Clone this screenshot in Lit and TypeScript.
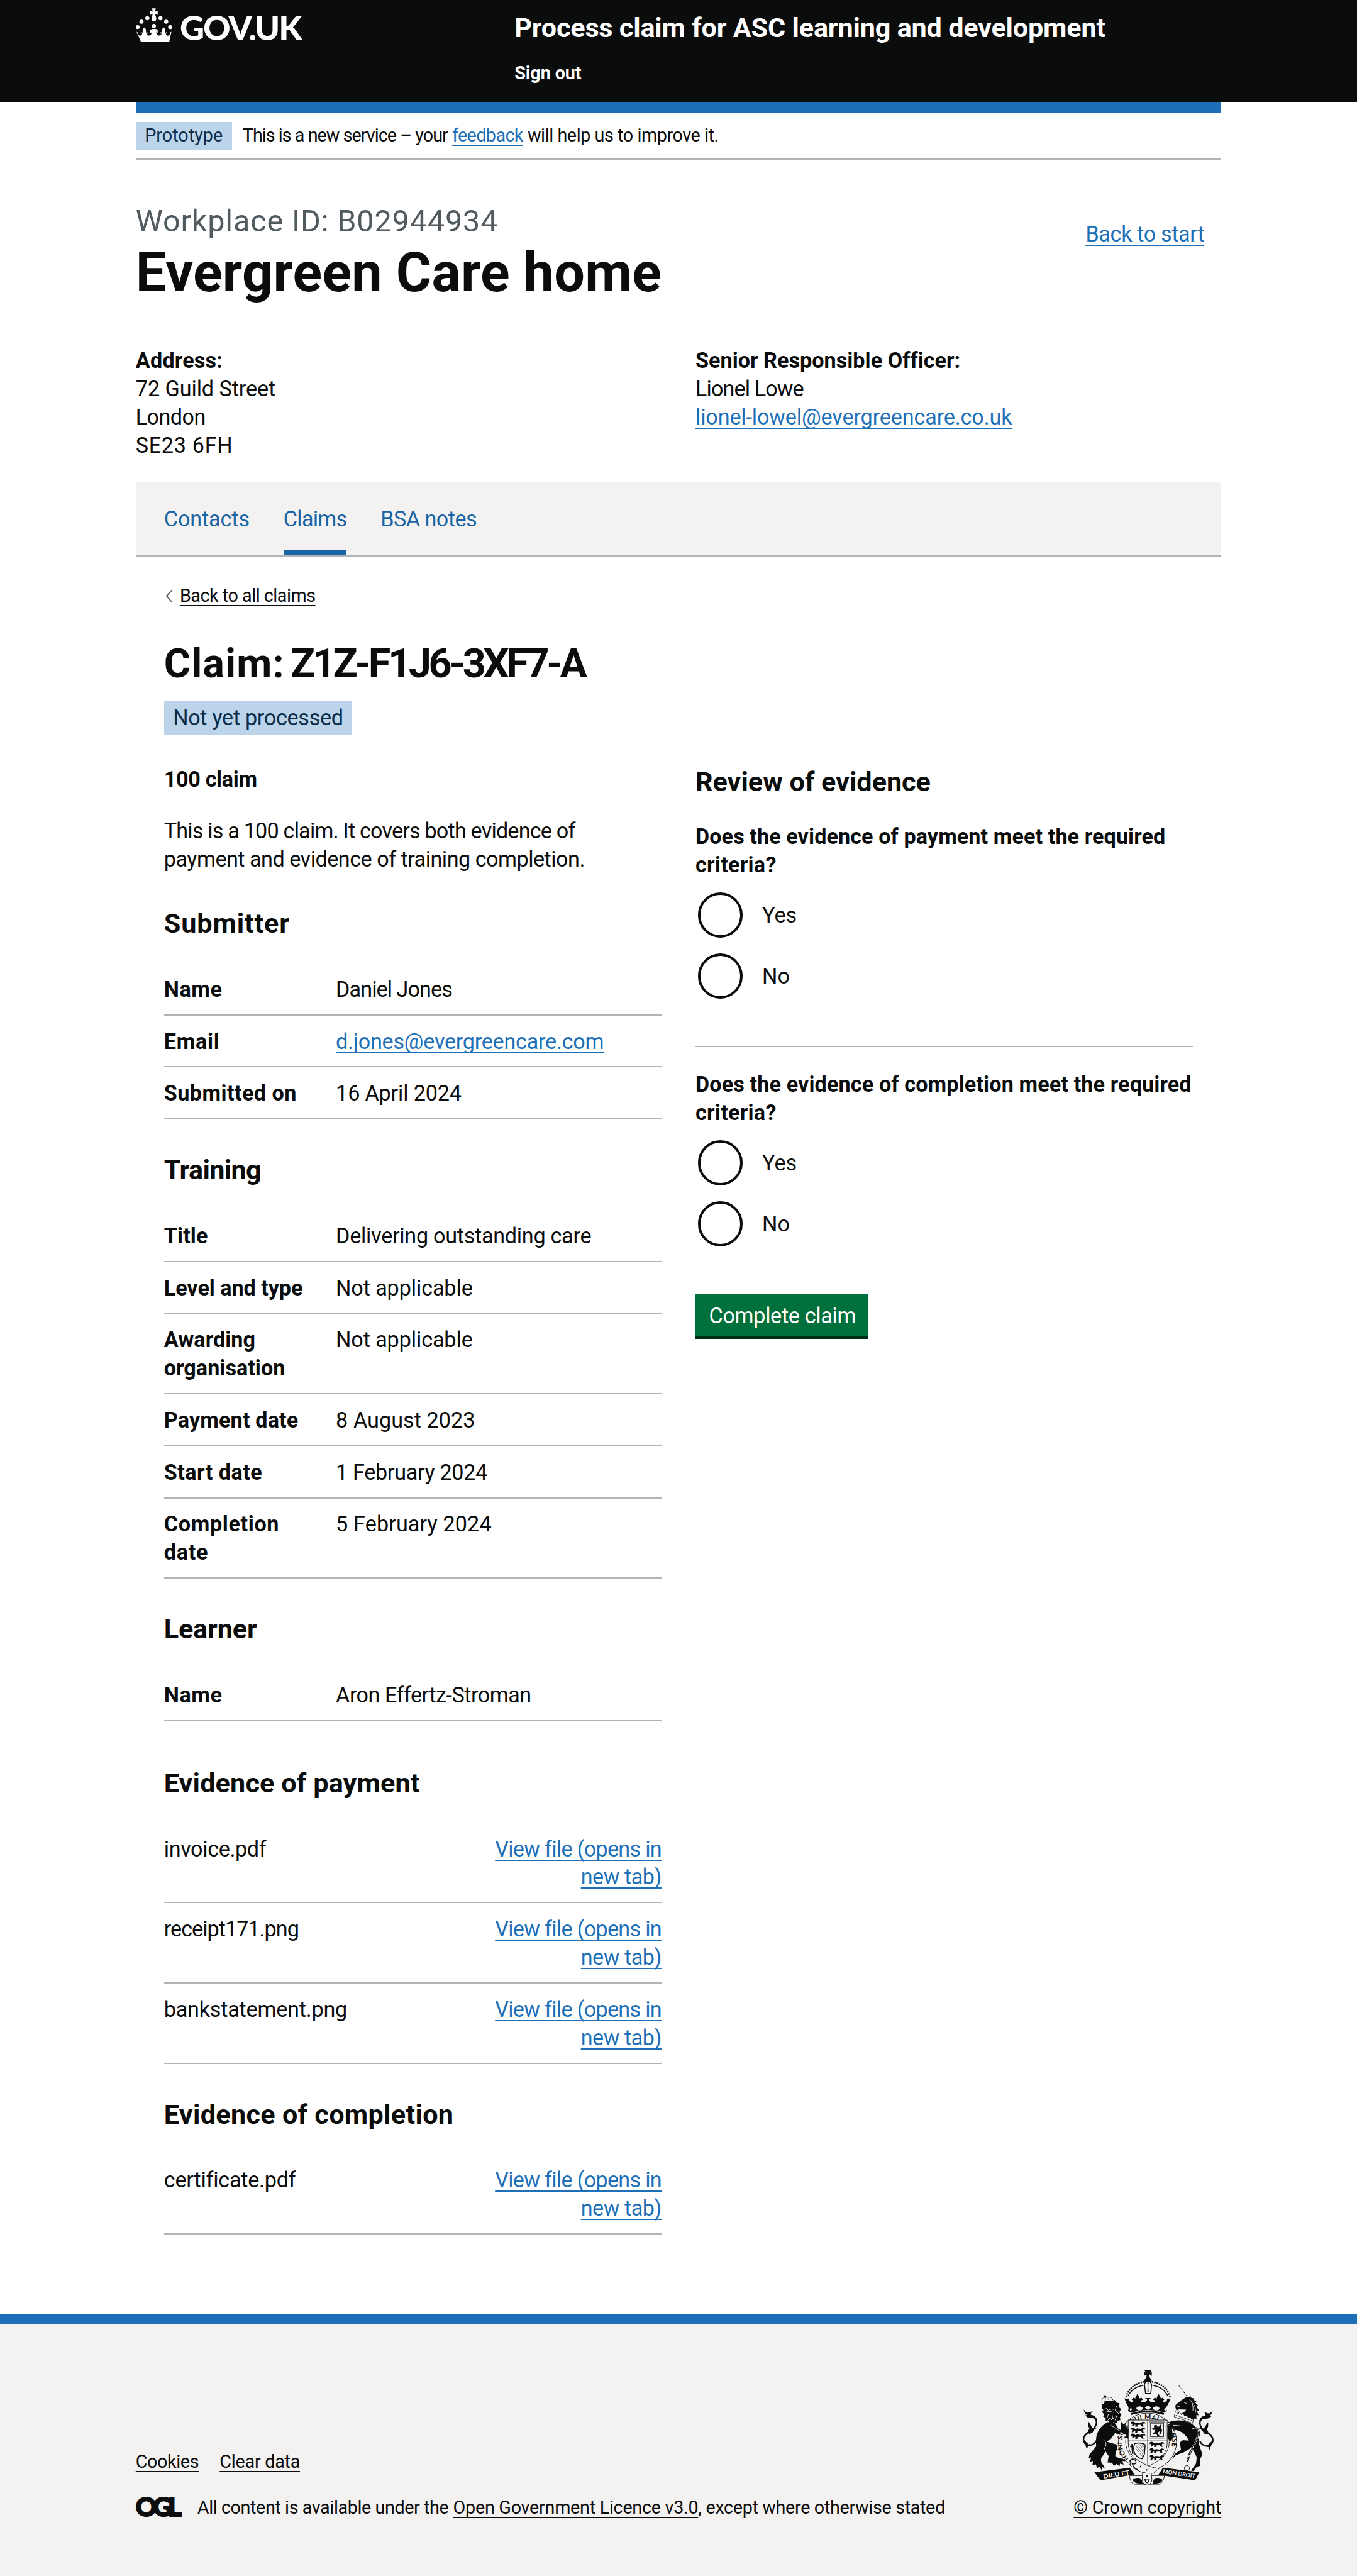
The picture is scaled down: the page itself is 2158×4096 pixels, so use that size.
import { LitElement, html, svg, css, unsafeCSS, nothing } from "lit";
import { customElement } from "lit/decorators.js";

const SCALE = 2158 / 2400;
const r = (n: number) => unsafeCSS(`${(n * SCALE).toFixed(3)}px`);

const FACE = '"Roboto", "Liberation Sans", sans-serif';
const context = document.createElement("canvas").getContext("2d")!;

/** A run of text, tracked so that its ink spans the given width. */
const run = (text: string, width: number, size = 38, weight = 400, face = FACE) => {
  context.font = `${weight} ${size}px ${face}`;
  const m = context.measureText(text);
  const ink = m.actualBoundingBoxRight + m.actualBoundingBoxLeft;
  const tracking = ((width - ink) / (text.length - 1)) * SCALE;
  return html`<span style="letter-spacing:${tracking.toFixed(3)}px">${text}</span>`;
};
const bold = (text: string, width: number, size = 38) => run(text, width, size, 700);

type Run = [text: string, width: number];

const base = css`
  * {
    box-sizing: border-box;
  }
  h1,
  h2,
  h3,
  p,
  dl,
  dd,
  dt,
  ul {
    margin: 0;
    padding: 0;
    font: inherit;
  }
  a {
    color: #1d70b8;
    text-decoration: underline;
    text-decoration-thickness: ${r(2)};
    text-underline-offset: 0.158em;
    text-decoration-skip-ink: none;
  }
  .strong {
    font-weight: 700;
  }
`;

@customElement("crown-logo")
class CrownLogo extends LitElement {
  static styles = css`
    :host {
      display: block;
    }
    svg {
      display: block;
      width: ${r(64)};
      height: ${r(61)};
      fill: #fff;
    }
  `;
  render() {
    const pearls = [
      [40, 141, 10.5],
      [60, 112, 11],
      [91, 94, 11],
      [161, 94, 11],
      [191, 112, 11],
      [212, 141, 10.5],
      [126, 135, 11],
    ];
    return html`<svg viewBox="30 41 192 182">
      ${pearls.map(([x, y, s]) => svg`<circle cx=${x} cy=${y} r=${s} />`)}
      <path
        d="M116 41h20l-4 18 14-5v22l-14-6 6 22q3 18-12 19-15-1-12-19l6-22-14 6V54l14 5z"
      />
      <path
        d="M32 166l12 6-5 1q5 17 17 13 8-4 7-12l-8 2 3-8 8 3q-1-6 1-9-4-9 8-20 13 11 8 20 3 3 1 9l8-3 3 8-8-2q0 10 12 12 13 0 17-14l2-4-10 4v-17l12 5-7-9h31l-7 9 12-5v17l-10-4 2 4q4 14 17 14 12-2 12-12l-8 2 3-8 8 3q-2-6 1-9-5-9 8-20 12 11 8 20 2 3 1 9l8-3 3 8-8-2q-1 8 7 12 12 4 17-13l-5-1 12-6-13 56q-74-7-154 0z"
        transform="matrix(.96 0 0 1 3 0)"
      />
    </svg>`;
  }
}

@customElement("royal-arms")
class RoyalArms extends LitElement {
  static styles = css`
    :host {
      display: block;
    }
    svg {
      display: block;
      width: ${r(233)};
      height: ${r(205)};
      overflow: visible;
    }
    .ink {
      fill: #0b0c0c;
    }
    .paper {
      fill: #f3f2f1;
    }
    .line {
      fill: none;
      stroke: #0b0c0c;
      stroke-linecap: round;
      stroke-linejoin: round;
      stroke-width: 3;
    }
    .outlined {
      fill: #f3f2f1;
      stroke: #0b0c0c;
      stroke-width: 3;
      stroke-linejoin: round;
    }
    .gap {
      fill: none;
      stroke: #f3f2f1;
      stroke-width: 3;
      stroke-linecap: round;
    }
    .w2 {
      stroke-width: 2;
    }
    .w5 {
      stroke-width: 5;
    }
    .w8 {
      stroke-width: 8;
    }
    .pearls {
      stroke-width: 9;
      stroke-dasharray: 0 12.5;
    }
    .beads {
      stroke-width: 7;
      stroke-dasharray: 0 11;
    }
    .fine {
      stroke-width: 4;
      stroke-dasharray: 0 6;
    }
    .horn {
      stroke-width: 4;
      stroke-dasharray: 5 4;
      stroke-linecap: butt;
    }
    .links {
      stroke-width: 11;
      stroke-dasharray: 12 6;
    }
    .holes {
      stroke-width: 5;
      stroke-dasharray: 8 10;
    }
    text {
      font-family: "Lato", sans-serif;
      font-weight: 700;
    }
    .scroll {
      font-size: 31px;
      fill: #f3f2f1;
    }
    .motto {
      font-size: 36px;
      fill: #0b0c0c;
    }
  `;
  passant(x: number, y: number) {
    return svg`<path class="ink" transform="translate(${x} ${y})"
      d="M2 3l8-3 9 3 3 6 12-4 18 3 12-6 10 2 4 8-9-3-5 6 3 9 9 2-16 2-7-10-16 1-5 6 7 3h-16l1-9-6-1-6 8-10-1 6-5-2-8-7 1z"/>`;
  }
  tail() {
    return svg`<path class="line w8" d="M268 502q-14 26-48 24-26-18-18-44 10-20 44-38 30-26 22-52-10-26-38-24"/>
      <path class="ink" d="M202 334q8 18 24 18l24-9q-14 12-10 20 26 4 32 26l-8 4q-10-16-28-12-16-2-28-14l10-2q-16-12-16-31z"/>
      <path class="ink" d="M226 398l22 34 28-2q-20 8-28 28l-18 8q-10-18 2-28-10-18-6-40zM198 492l30 28 12-2-16 12-6 16-8-22z"/>`;
  }
  render() {
    return html`<svg viewBox="190 124 700 615">
      <g>
        ${this.tail()}
        <g transform="matrix(-1 0 0 1 1088 4)">${this.tail()}</g>

        <path
          class="ink"
          d="M328 402q-44 24-58 68-6 34-2 60l-36 44-4 18 12-2-4 22 14-4-2 22 18-4 6 20 14-6 12 20 2-20 12 10-2-18q-20-10-16-38l24-36 16 24-6 34 24 2 10 18 12-12 18 12 2-14 20 6-8-18 20-4-20-10q-28-2-38-18 10-24 12-56l-56-16q30-22 44-46l34 14 30 22 8-16-14-20-42-24-16-28z"
        />
        <path class="gap" d="M344 418l60 38M306 496q14 8 14 26l-10 26" />
        <path
          class="ink"
          d="M296 322l10 18-8 8 12 12-6 12 14 8 0 14 16 4 12 14 14-10 16 6 4-14 16-2-2-16 8-14-12-12 10-18-12-10 4-20-16-4-10-14-18 6-30-2z"
        />
        <path
          class="gap"
          d="M308 334l16-4 8 10 12-8 14 2M318 350q18-10 40 0M332 362l-6 16M352 360l4 24 10-6M376 316l-8 24 18 16M378 366l-10 26M330 392l8-10 12 8"
        />
        <path class="line fine" d="M298 300q-2-26 14-30h30q18 6 14 30M314 300q-4-18 12-26 14 8 10 26" />
        <path class="ink" d="M300 306q26-10 56-2l4 10q-34-8-60 4zM309 258l14 3-3 11h-10z" />

        <path class="line horn" d="M707 208l44 58" />
        <path
          class="ink"
          d="M688 322l2-12 30-24 30-20 10 4 8-8 4 10 16 4-4 6 18 12-8 4 16 18-10 4 14 20-12 2 10 24-12-2 0 24-14-6-8 14q-30-12-66-36 24-8 34-24l-38-2-14 6z"
        />
        <path class="gap" d="M736 298l12 4M764 280q22 24 18 60M780 300q18 20 16 50M700 318l10 2" />
        <path
          class="ink"
          d="M654 402q32-14 72-8 68 10 82 64l6 62 18 52-12 28 2 34-20 6-16 22-14-2 26-38 4-34-14-28-14-22-40 24-44 16-18 20 12-26 34-24-6-38 16-12 32 2q-18-42-66-56l-42-2 8 46-14 4-12-42q0-34 18-48z"
        />
        <path class="outlined" d="M688 346l16 12 4-12 12 16 10-8 8 16 14-6 4 16 14-4 4 12 10-2-4 22q-42-16-98-34z" />
        <path class="line fine" d="M692 366l84 28" />
        <path class="gap" d="M672 418l44 4M786 520q-10 18-20 24M806 470l-20 54" />
        <path class="line links" d="M780 438q24-14 32 14 4 20-10 50-22 40-36 64l-14 44" />
        <path class="gap holes w5" d="M780 438q24-14 32 14 4 20-10 50-22 40-36 64l-14 44" />
        <circle class="line" cx="750" cy="647" r="14" />
      </g>

      <ellipse class="outlined" cx="540" cy="506" rx="155" ry="152" />
      <ellipse class="outlined" cx="540" cy="506" rx="116" ry="114" />
      <path id="motto" fill="none" d="M442 596A133 124 0 1 1 630 600" />
      <text class="motto"><textPath href="#motto" textLength="520">HONI SOIT QUI MAL Y PENSE</textPath></text>

      <path class="outlined" d="M438 391h207v120q0 84-104 126-103-42-103-126z" />
      <path class="line" d="M541 391v246M438 497h207" />
      ${[398, 430, 462].map((y) => this.passant(452, y))}
      ${[506, 540, 576].map((y) => this.passant(552, y))}
      <path class="line" d="M551 401h82v86h-82zM558 408h68v72h-68z" />
      <path
        class="ink"
        d="M574 420l14-4 6 12 10-4 2-10 10 6-6 14 8 10-6 22-10-4 4-12-10 6 2 12 8 8-14-2-6-12-10 6-8-4 8-8 6-14-12 2-6-8 12-2z"
      />
      <path class="line w5" d="M472 516q36-8 56 6l-4 50-12 24q-16 2-38-24-14-26-2-56z" />
      <path class="line w2" d="M480 530l36 44M486 522l34 40M494 518l28 32M504 516l20 22M476 540l38 44" />
      <path class="line w8" d="M458 522l4 46M452 530v2" />

      <path class="ink" d="M400 400l40 40-2 50-24-8 18-8-34-20z" />
      <path class="ink" d="M648 430l16-22 18-6-12 34 6 50-16 18-14-24z" />

      <path class="ink" d="M258 668l188-24 26 36-28 4-146 26-12-4z" />
      <path class="ink" d="M622 644l194 24-20 38-10 4-172-26-16-2z" />
      <text class="scroll" transform="translate(306 702) rotate(-9)" textLength="142" lengthAdjust="spacingAndGlyphs">DIEU ET</text>
      <text class="scroll" transform="translate(620 674) rotate(8.5)" textLength="174" lengthAdjust="spacingAndGlyphs">MON DROIT</text>
      <path class="outlined" d="M444 686q6 44 28 46h130q24-8 28-46z" />
      <path class="ink" d="M462 712q2-14 30-14 18 0 22 30-42 4-52-16zM620 712q-2-14-30-14-18 0-22 30 42 4 52-16z" />
      <path class="outlined" d="M514 670h46l4 40q-6 26-26 26-22-2-26-26z" />
      <path class="line w5" d="M526 704q4 20 12 20t12-20z" />
      <path class="outlined" d="M450 602q22-12 46 6 52 36 106 40l-14 12-16 14q-70 6-124-42z" />
      <path class="line w5" d="M446 612q2-16 20-12 18 6 12 20-12 10-20 0 6 26 30 34" />
      <path class="ink" d="M500 634h7v8h-7zM532 652h7v8h-7zM534 684h7v8h-7z" />

      <path
        class="ink"
        d="M524 126h38l-9 14 10-7v23l-11-8q-4 12 1 18 14 10 7 28h-34q-7-18 7-28 5-6 1-18l-11 8v-23l10 7z"
      />
      <path class="line pearls" d="M428 264q22-62 92-76" />
      <path class="line pearls" d="M659 264q-22-62-92-76" />
      <path class="line w5" d="M438 262q22-46 80-56M648 262q-22-46-80-56" />
      <path class="outlined w5" d="M524 200q8-16 19-16t19 16l-4 50h-28z" />
      <path class="line beads" d="M543 194v50" />
      <path
        class="ink"
        d="M422 276l20 2q-2 14 14 18l12-6-12-8 8-10 12 4q-2-10 10-20 12 10 10 20l12-4 8 10-14 8q14 14 30 2 8-6 6-12l-12-6h34l-12 6q-2 6 6 12 16 12 30-2l-14-8 8-10 12 4q-2-10 10-20 12 10 10 20l12-4 8 10-12 8 12 6q16-4 14-18l20-2q-10 24-22 44l-2 12 4 10-14 8-4 14q-86-26-172 0l-4-14-14-8 4-10-2-12q-12-20-20-44z"
      />
      <path class="paper" d="M543 313l17 12-17 12-17-12zM452 324l6 10-9 10-3-10zM634 324l6 10-4 10-8-10z" />
      <ellipse class="paper" cx="498" cy="329" rx="17" ry="11" />
      <ellipse class="paper" cx="587" cy="329" rx="17" ry="11" />
      <path class="gap" d="M456 352q87-26 174 0" />
      <path class="ink" d="M486 250l5 16h-10zM600 250l5 16h-10z" />
    </svg>`;
  }
}

@customElement("summary-list")
class SummaryList extends LitElement {
  static properties = { rows: { attribute: false }, heading: { attribute: false } };
  declare rows: { key: Run[]; value: Run; link?: boolean }[];
  declare heading: Run;
  static styles = [
    base,
    css`
      :host {
        display: block;
      }
      .heading {
        font-weight: 700;
        font-size: ${r(48)};
        line-height: ${r(60)};
        margin-bottom: ${r(40)};
      }
      .row {
        display: grid;
        grid-template-columns: ${r(304)} 1fr;
        padding: ${r(21)} 0 0;
        border-bottom: 2px solid #b1b4b6;
        height: ${r(92)};
      }
      .row.tall {
        height: ${r(142)};
      }
      .line {
        display: block;
        white-space: nowrap;
      }
    `,
  ];
  render() {
    return html`<h3 class="heading">${bold(this.heading[0], this.heading[1], 48)}</h3>
      <dl>
        ${this.rows.map(
          (row) => html`<div class="row ${row.key.length > 1 ? "tall" : ""}">
            <dt class="strong">${row.key.map(([t, w]) => html`<span class="line">${bold(t, w)}</span>`)}</dt>
            <dd class="line">
              ${row.link ? html`<a href="#">${run(...row.value)}</a>` : run(...row.value)}
            </dd>
          </div>`,
        )}
      </dl>`;
  }
}

@customElement("file-list")
class FileList extends LitElement {
  static properties = { files: { attribute: false }, heading: { attribute: false } };
  declare files: Run[];
  declare heading: Run;
  static styles = [
    base,
    css`
      :host {
        display: block;
      }
      .heading {
        font-weight: 700;
        font-size: ${r(48)};
        line-height: ${r(60)};
        margin-bottom: ${r(40)};
      }
      .row {
        display: flex;
        justify-content: space-between;
        padding: ${r(21)} 0 0;
        border-bottom: 2px solid #b1b4b6;
        height: ${r(142)};
      }
      .view {
        text-align: right;
      }
    `,
  ];
  render() {
    return html`<h3 class="heading">${bold(this.heading[0], this.heading[1], 48)}</h3>
      ${this.files.map(
        ([name, width]) => html`<div class="row">
          <span>${run(name, width)}</span>
          <a class="view" href="#">${run("View file (opens in", 292)}<br />${run("new tab)", 139)}</a>
        </div>`,
      )}`;
  }
}

@customElement("radio-group")
class RadioGroup extends LitElement {
  static properties = { question: { attribute: false } };
  declare question: Run[];
  static styles = [
    base,
    css`
      :host {
        display: block;
      }
      .options {
        display: flex;
        flex-direction: column;
        gap: ${r(28)};
        padding: ${r(23)} 0 0 ${r(4)};
      }
      .option {
        display: flex;
        align-items: center;
        gap: ${r(34)};
        height: ${r(80)};
      }
      .label {
        padding-top: ${r(2)};
      }
      .circle {
        width: ${r(80)};
        height: ${r(80)};
        border: ${r(4.5)} solid #0b0c0c;
        border-radius: 50%;
      }
    `,
  ];
  render() {
    return html`<p class="strong">${this.question.map(([t, w], i) => html`${i ? html`<br />` : nothing}${bold(t, w)}`)}</p>
      <div class="options">
        ${["Yes", "No"].map(
          (label) => html`<div class="option"><span class="circle"></span><span class="label">${label}</span></div>`,
        )}
      </div>`;
  }
}

@customElement("app-root")
class AppRoot extends LitElement {
  static styles = [
    base,
    css`
      :host {
        display: flex;
        flex-direction: column;
        width: 2158px;
        height: 4096px;
        overflow: hidden;
        background: #fff;
        color: #0b0c0c;
        font-family: "Roboto", "Liberation Sans", sans-serif;
        font-size: ${r(38)};
        line-height: ${r(50)};
        white-space: nowrap;
      }
      .container {
        width: ${r(1920)};
        margin: 0 auto;
      }
      .header {
        background: #0b0c0c;
        color: #fff;
        height: ${r(180)};
        flex: none;
      }
      .header-grid {
        display: grid;
        grid-template-columns: ${r(668)} 1fr;
      }
      .brand {
        display: flex;
        gap: ${r(14)};
        padding-top: ${r(14)};
      }
      .wordmark {
        font-family: "Lato", sans-serif;
        font-weight: 900;
        font-size: ${r(60)};
        line-height: ${r(68)};
      }
      .service {
        font-size: ${r(48)};
        line-height: ${r(60)};
        font-weight: 700;
        padding: ${r(20)} 0 0 ${r(2)};
      }
      .sign-out {
        font-size: ${r(32)};
        line-height: ${r(40)};
        font-weight: 700;
        padding: ${r(30)} 0 0 ${r(2)};
      }
      .accent {
        height: ${r(20)};
        background: #1d70b8;
      }
      .phase {
        display: flex;
        gap: ${r(19)};
        font-size: ${r(32)};
        padding: ${r(16)} 0 0;
        border-bottom: 2px solid #b1b4b6;
        height: ${r(82)};
      }
      .tag {
        background: #bbd4ea;
        color: #0c2d4a;
      }
      .phase-tag {
        line-height: ${r(48)};
        height: ${r(50)};
        width: ${r(170)};
        padding-left: ${r(16)};
      }
      .phase-text {
        line-height: ${r(48)};
      }
      .masthead {
        display: flex;
        justify-content: space-between;
        padding: ${r(80)} ${r(30)} 0 0;
      }
      .caption {
        display: block;
        color: #505a5f;
        font-size: ${r(54)};
        line-height: ${r(60)};
      }
      .name {
        font-size: ${r(96)};
        line-height: ${r(100)};
        font-weight: 700;
        margin-top: ${r(11)};
      }
      .start {
        padding-top: ${r(27)};
      }
      .details {
        display: grid;
        grid-template-columns: ${r(990)} 1fr;
        padding: ${r(80)} 0 ${r(39)};
      }
      .nav {
        display: flex;
        gap: ${r(60)};
        background: #f3f2f1;
        border-bottom: 2px solid #b1b4b6;
        height: ${r(132)};
        padding-left: ${r(50)};
      }
      .tab {
        color: #1a65a6;
        text-decoration: none;
        padding-top: ${r(41)};
      }
      .tab.current {
        border-bottom: ${r(10)} solid #1a65a6;
      }
      .panel {
        padding: ${r(50)} ${r(50)} 0;
      }
      .back {
        display: flex;
        align-items: center;
        gap: ${r(12)};
        padding-left: ${r(3)};
        font-size: ${r(32)};
        line-height: ${r(40)};
      }
      .chevron {
        width: ${r(13)};
        height: ${r(24)};
        fill: none;
        stroke: #505a5f;
        stroke-width: 2;
      }
      .dark {
        color: #0b0c0c;
      }
      .claim {
        font-size: ${r(72)};
        line-height: ${r(80)};
        font-weight: 700;
        margin-top: ${r(60)};
        display: flex;
        gap: ${r(10)};
      }
      .status {
        display: inline-block;
        margin-top: ${r(26)};
        width: ${r(332)};
        height: ${r(60)};
        padding: ${r(5)} 0 0 ${r(16)};
      }
      .columns {
        display: grid;
        grid-template-columns: ${r(880)} ${r(880)};
        gap: ${r(60)};
        padding-top: ${r(54)};
      }
      .stack {
        display: flex;
        flex-direction: column;
      }
      .intro {
        margin: ${r(41)} 0 ${r(59)};
      }
      .stack summary-list,
      .stack file-list {
        margin-bottom: ${r(60)};
      }
      .stack .learner {
        margin-bottom: ${r(80)};
      }
      .review-title {
        font-size: ${r(48)};
        line-height: ${r(60)};
        font-weight: 700;
        margin-bottom: ${r(41)};
      }
      .rule {
        height: 2px;
        background: #b1b4b6;
        margin: ${r(84)} 0 ${r(41)};
      }
      .button {
        align-self: flex-start;
        margin-top: ${r(84)};
        width: ${r(306)};
        height: ${r(80)};
        padding: ${r(14)} 0 0 ${r(24)};
        background: #00703c;
        border-bottom: ${r(5)} solid #002d18;
        color: #fff;
      }
      .footer {
        margin-top: ${r(80)};
        border-top: ${r(20)} solid #1d70b8;
        background: #f3f2f1;
        font-size: ${r(32)};
        line-height: ${r(40)};
        flex: 1;
      }
      .footer-row {
        display: flex;
        justify-content: space-between;
        align-items: flex-end;
        height: ${r(345)};
      }
      .links {
        display: flex;
        gap: ${r(37)};
        margin-bottom: ${r(40)};
      }
      .licence {
        display: flex;
        align-items: center;
        gap: ${r(27)};
      }
      .ogl {
        font-family: "Lato", sans-serif;
        font-weight: 900;
        font-size: ${r(46)};
        width: ${r(82)};
        line-height: ${r(36)};
        -webkit-text-stroke: ${r(2.4)} #0b0c0c;
        margin-bottom: ${r(5)};
      }
      .copyright {
        display: flex;
        flex-direction: column;
        align-items: center;
        gap: ${r(20)};
      }
    `,
  ];

  render() {
    const lato = '"Lato", sans-serif';
    return html`
      <header class="header">
        <div class="container header-grid">
          <div class="brand">
            <crown-logo></crown-logo>
            <span class="wordmark">${run("GOV.UK", 216, 60, 900, lato)}</span>
          </div>
          <div>
            <div class="service">${bold("Process claim for ASC learning and development", 1042, 48)}</div>
            <div class="sign-out">${bold("Sign out", 117.5, 32)}</div>
          </div>
        </div>
      </header>

      <main class="container">
        <div class="accent"></div>
        <div class="phase">
          <span class="tag phase-tag">${run("Prototype", 135, 32)}</span>
          <span class="phase-text"
            >${run("This is a new service – your", 364, 32)} <a href="#">${run("feedback", 127, 32)}</a> ${run(
              "will help us to improve it.",
              336,
              32,
            )}</span
          >
        </div>

        <div class="masthead">
          <div>
            <span class="caption">${run("Workplace ID: B02944934", 639, 54)}</span>
            <h1 class="name">${bold("Evergreen Care home", 922, 96)}</h1>
          </div>
          <div class="start"><a href="#">${run("Back to start", 207)}</a></div>
        </div>

        <div class="details">
          <div>
            <div class="strong">${bold("Address:", 152)}</div>
            ${run("72 Guild Street", 246)}<br />${run("London", 119)}<br />${run("SE23 6FH", 167)}
          </div>
          <div>
            <div class="strong">${bold("Senior Responsible Officer:", 464)}</div>
            ${run("Lionel Lowe", 188)}<br /><a href="#">${run("lionel-lowel@evergreencare.co.uk", 559)}</a>
          </div>
        </div>

        <nav class="nav">
          <a class="tab" href="#">${run("Contacts", 148)}</a>
          <a class="tab current" href="#">${run("Claims", 109)}</a>
          <a class="tab" href="#">${run("BSA notes", 166)}</a>
        </nav>

        <div class="panel">
          <div class="back">
            <svg class="chevron" viewBox="0 0 13 24"><path d="M12 1L2 12l10 11" /></svg>
            <a class="dark" href="#">${run("Back to all claims", 237, 32)}</a>
          </div>
          <h2 class="claim">
            ${bold("Claim:", 205, 72)} ${bold("Z1Z-F1J6-3XF7-A", 524, 72)}
          </h2>
          <span class="tag status">${run("Not yet processed", 296)}</span>

          <div class="columns">
            <div class="stack">
              <p class="strong">${bold("100 claim", 160)}</p>
              <p class="intro">
                ${run("This is a 100 claim. It covers both evidence of", 729)}<br />${run(
                  "payment and evidence of training completion.",
                  740,
                )}
              </p>
              <summary-list
                .heading=${["Submitter", 221]}
                .rows=${[
                  { key: [["Name", 100]], value: ["Daniel Jones", 202] },
                  { key: [["Email", 94]], value: ["d.jones@evergreencare.com", 471], link: true },
                  { key: [["Submitted on", 232]], value: ["16 April 2024", 219] },
                ]}
              ></summary-list>
              <summary-list
                .heading=${["Training", 170]}
                .rows=${[
                  { key: [["Title", 77]], value: ["Delivering outstanding care", 448] },
                  { key: [["Level and type", 243]], value: ["Not applicable", 238] },
                  { key: [["Awarding", 160], ["organisation", 212]], value: ["Not applicable", 238] },
                  { key: [["Payment date", 235]], value: ["8 August 2023", 242] },
                  { key: [["Start date", 172]], value: ["1 February 2024", 265] },
                  { key: [["Completion", 201], ["date", 76]], value: ["5 February 2024", 273] },
                ]}
              ></summary-list>
              <summary-list
                class="learner"
                .heading=${["Learner", 162]}
                .rows=${[{ key: [["Name", 100]], value: ["Aron Effertz-Stroman", 344] }]}
              ></summary-list>
              <file-list
                .heading=${["Evidence of payment", 449]}
                .files=${[
                  ["invoice.pdf", 180],
                  ["receipt171.png", 235],
                  ["bankstatement.png", 320],
                ]}
              ></file-list>
              <file-list
                .heading=${["Evidence of completion", 507]}
                .files=${[["certificate.pdf", 232]]}
              ></file-list>
            </div>

            <div class="stack">
              <h3 class="review-title">${bold("Review of evidence", 412, 48)}</h3>
              <radio-group
                .question=${[
                  ["Does the evidence of payment meet the required", 828],
                  ["criteria?", 141],
                ]}
              ></radio-group>
              <div class="rule"></div>
              <radio-group
                .question=${[
                  ["Does the evidence of completion meet the required", 874],
                  ["criteria?", 141],
                ]}
              ></radio-group>
              <div class="button">${run("Complete claim", 256)}</div>
            </div>
          </div>
        </div>
      </main>

      <footer class="footer">
        <div class="container footer-row">
          <div>
            <div class="links">
              <a class="dark" href="#">${run("Cookies", 109.5, 32)}</a>
              <a class="dark" href="#">${run("Clear data", 140, 32)}</a>
            </div>
            <div class="licence">
              <span class="ogl">${run("OGL", 80, 46, 900, lato)}</span>
              <span
                >${run("All content is available under the", 444, 32)} <a class="dark" href="#"
                  >${run("Open Government Licence v3.0", 432, 32)}</a
                >${run(", except where otherwise stated", 435, 32)}</span
              >
            </div>
          </div>
          <div class="copyright">
            <royal-arms></royal-arms>
            <a class="dark" href="#">${run("© Crown copyright", 260, 32)}</a>
          </div>
        </div>
      </footer>
    `;
  }
}
